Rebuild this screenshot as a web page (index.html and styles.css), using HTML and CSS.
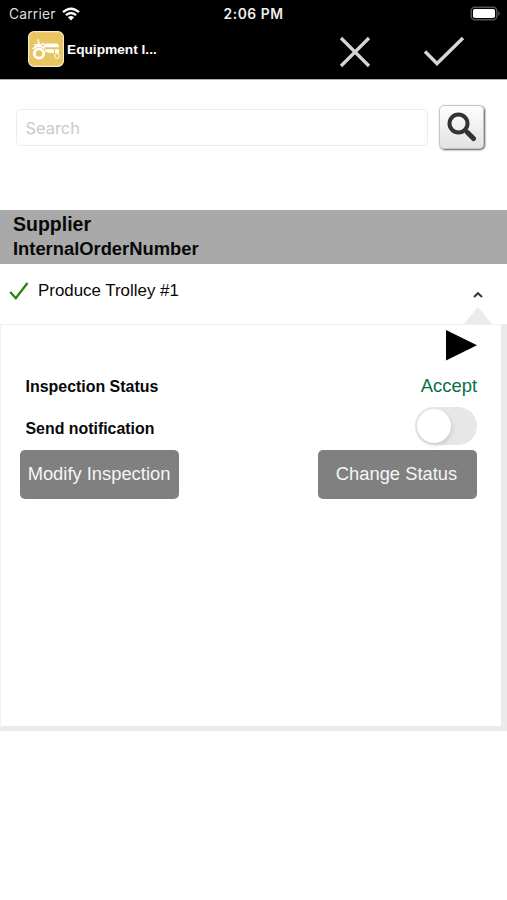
FILE: index.html
```
<!DOCTYPE html>
<html lang="en">
<head>
<meta charset="utf-8">
<title>Equipment Inspection</title>
<link rel="stylesheet" href="styles.css">
</head>
<body>
<header class="top">
  <div class="status">
    <div class="carrier"><span>Carrier</span>
      <svg width="18" height="14" viewBox="0 0 18 14" fill="none" stroke="#fff" stroke-width="2.4"><path d="M1 5.2Q9-1.8 17 5.2M3.9 8.2Q9 3.7 14.1 8.2"/><path d="M9 13.4L5.9 10.3Q9 7.7 12.1 10.3Z" fill="#fff" stroke="none"/></svg>
    </div>
    <div class="time">2:06 PM</div>
    <svg class="battery" width="32" height="16" viewBox="0 0 32 16"><rect x="1.2" y="1.2" width="25.6" height="12.6" rx="3.6" fill="none" stroke="#555" stroke-width="1.5"/><rect x="3" y="3" width="22" height="9" rx="1.8" fill="#fff"/><path d="M28.3 5Q31.5 7.5 28.3 10Z" fill="#555"/></svg>
  </div>
  <div class="bar">
    <svg class="logo" width="36" height="36" viewBox="0 0 36 36"><rect x=".6" y=".6" width="34.8" height="34.8" rx="5.5" fill="#e8c560" stroke="#f6ebcc" stroke-width="1.2"/><g fill="none" stroke="#fff"><circle cx="11" cy="22.5" r="4.7" stroke-width="2.8"/><circle cx="29" cy="25" r="2.3" stroke-width="1.2" stroke="#f7e9be"/><path d="M10 8.2L11.2 14M14.5 11.5L16.5 15M6 13.7H14M4.5 18Q10 12.5 17 17.5" stroke-width="1.5"/></g><path d="M15.5 13.8L18 12.5H29Q31 13 31 16.3H16ZM17 18.3H26V22H22L17.5 21ZM27 18.3H31V22H27Z" fill="#fff"/></svg>
    <h1>Equipment I...</h1>
    <svg class="close" width="32" height="32" viewBox="0 0 32 32" fill="none" stroke="#d6d6d6" stroke-width="3.2"><path d="M2 2L30 30M30 2L2 30"/></svg>
    <svg class="confirm" width="42" height="32" viewBox="0 0 42 32" fill="none" stroke="#d6d6d6" stroke-width="3.4"><path d="M2 15.5L14 27.5L40 2"/></svg>
  </div>
</header>
<main>
  <div class="search">
    <input type="text" placeholder="Search" aria-label="Search">
    <button class="find" aria-label="Find"><svg width="30" height="30" viewBox="0 0 30 30" fill="none" stroke="#333"><circle cx="11.5" cy="11.5" r="9" stroke-width="4"/><path d="M18 18L21 21" stroke-width="3"/><path d="M20.5 20.5L26.5 26.5" stroke-width="5" stroke-linecap="round"/></svg></button>
  </div>
  <div class="group"><div class="supplier">Supplier</div><div class="order">InternalOrderNumber</div></div>
  <div class="item">
    <svg class="tick" width="20" height="20" viewBox="0 0 20 20" fill="none" stroke="#27850e" stroke-width="2.3"><path d="M1.2 11L6.8 17.2L18.5 2"/></svg>
    <span>Produce Trolley #1</span>
    <svg class="caret" width="28" height="36" viewBox="0 0 28 36"><path d="M10 9L14 5.2L18 9" fill="none" stroke="#303840" stroke-width="2"/><path d="M14 19L28 36H0Z" fill="#ebebeb"/></svg>
  </div>
  <section class="detail">
    <svg class="play" width="31" height="31" viewBox="0 0 31 31"><path d="M0 0L31 15.2L0 30.5Z"/></svg>
    <div class="row first"><b>Inspection Status</b><span class="accept">Accept</span></div>
    <div class="row second"><b class="send">Send notification</b><div class="toggle"><i></i></div></div>
    <div class="actions"><button class="modify">Modify Inspection</button><button class="change">Change Status</button></div>
  </section>
</main>
</body>
</html>
```
FILE: styles.css
```
* { box-sizing: border-box; }
body { margin: 0; background: #fff; color: #080808; font-family: "Liberation Sans", sans-serif; }
svg { display: block; flex: none; }
button { border: 0; padding: 0; font-family: inherit; }
.top { height: 80px; background: #000; border-bottom: 1px solid #b0b0b0; color: #fff; }
.status { display: grid; grid-template-columns: 1fr auto 1fr; align-items: center; height: 27px; padding: 0 5px 0 5px; }
.carrier { display: flex; align-items: center; gap: 6px; padding-left: 4px; font: 13.8px/27px Inter, sans-serif; letter-spacing: .2px; color: #ddd; }
.time { padding-top: 1px; font: 600 13.8px/27px Inter, sans-serif; letter-spacing: .55px; color: #eee; }
.battery { justify-self: end; }
.bar { display: flex; align-items: flex-start; height: 52px; padding-left: 27.5px; }
.logo { margin-top: 4px; }
h1 { width: 100px; margin: 14px 0 0 3.5px; font-size: 13.7px; line-height: 17px; white-space: nowrap; }
.close { width: 32px; margin: 9px 0 0 172px; }
.confirm { margin: 9px 0 0 52px; }
.search { display: flex; align-items: flex-start; height: 130px; padding: 25px 0 0 16px; }
input { width: 412px; height: 37px; margin-top: 4px; border: 1.5px solid #ededed; border-radius: 5px; padding: 0 8.5px; background: #fff; font: 16.4px Inter, sans-serif; }
input::placeholder { color: #c9c9cb; opacity: 1; }
.find { display: grid; place-items: center; width: 45px; height: 44px; margin-left: 11px; border: 1px solid #c5c5c5; border-radius: 5px; background: linear-gradient(#fff, #e2e2e2); box-shadow: 1px 1px 2px #555; }
.group { height: 54px; padding: 2px 13px; background: #a9a9a9; font-weight: bold; }
.supplier { font-size: 19.5px; line-height: 25px; }
.order { font-size: 18.35px; line-height: 24px; }
.item { display: flex; height: 60px; padding-left: 9px; font-size: 16.9px; line-height: 20px; }
.item span { width: 426px; margin: 17px 0 0 9px; }
.tick { margin-top: 17px; }
.caret { margin-top: 24px; }
.detail { height: 407px; border: 1px solid #f0f0f0; border-right: 6px solid #ebebeb; border-bottom: 5px solid #ebebeb; padding: 5px 24px 0 18px; }
.play { margin-left: 427px; }
.row { display: flex; justify-content: space-between; padding-left: 6.5px; font-size: 15.95px; }
.first { height: 46px; padding-top: 16px; line-height: 20px; }
.accept { color: #087044; font-size: 18.4px; line-height: 18px; }
.second { height: 43px; line-height: 43px; }
.send { font-size: 15.9px; }
.toggle { width: 62px; height: 38px; border-radius: 19px; padding: 2px; background: #e7e7ea; }
.toggle i { display: block; width: 34px; height: 34px; border-radius: 50%; background: #fff; box-shadow: 1px 2px 4px #0002; }
.actions { display: flex; justify-content: space-between; padding-left: 1px; }
.actions button { height: 49px; border-radius: 5px; padding-bottom: 1px; background: #808080; color: #f5f5f5; font-size: 18.35px; white-space: nowrap; }
.actions .modify { width: 159px; padding-right: 1px; }
.actions .change { width: 159px; padding-right: 2px; }
```
